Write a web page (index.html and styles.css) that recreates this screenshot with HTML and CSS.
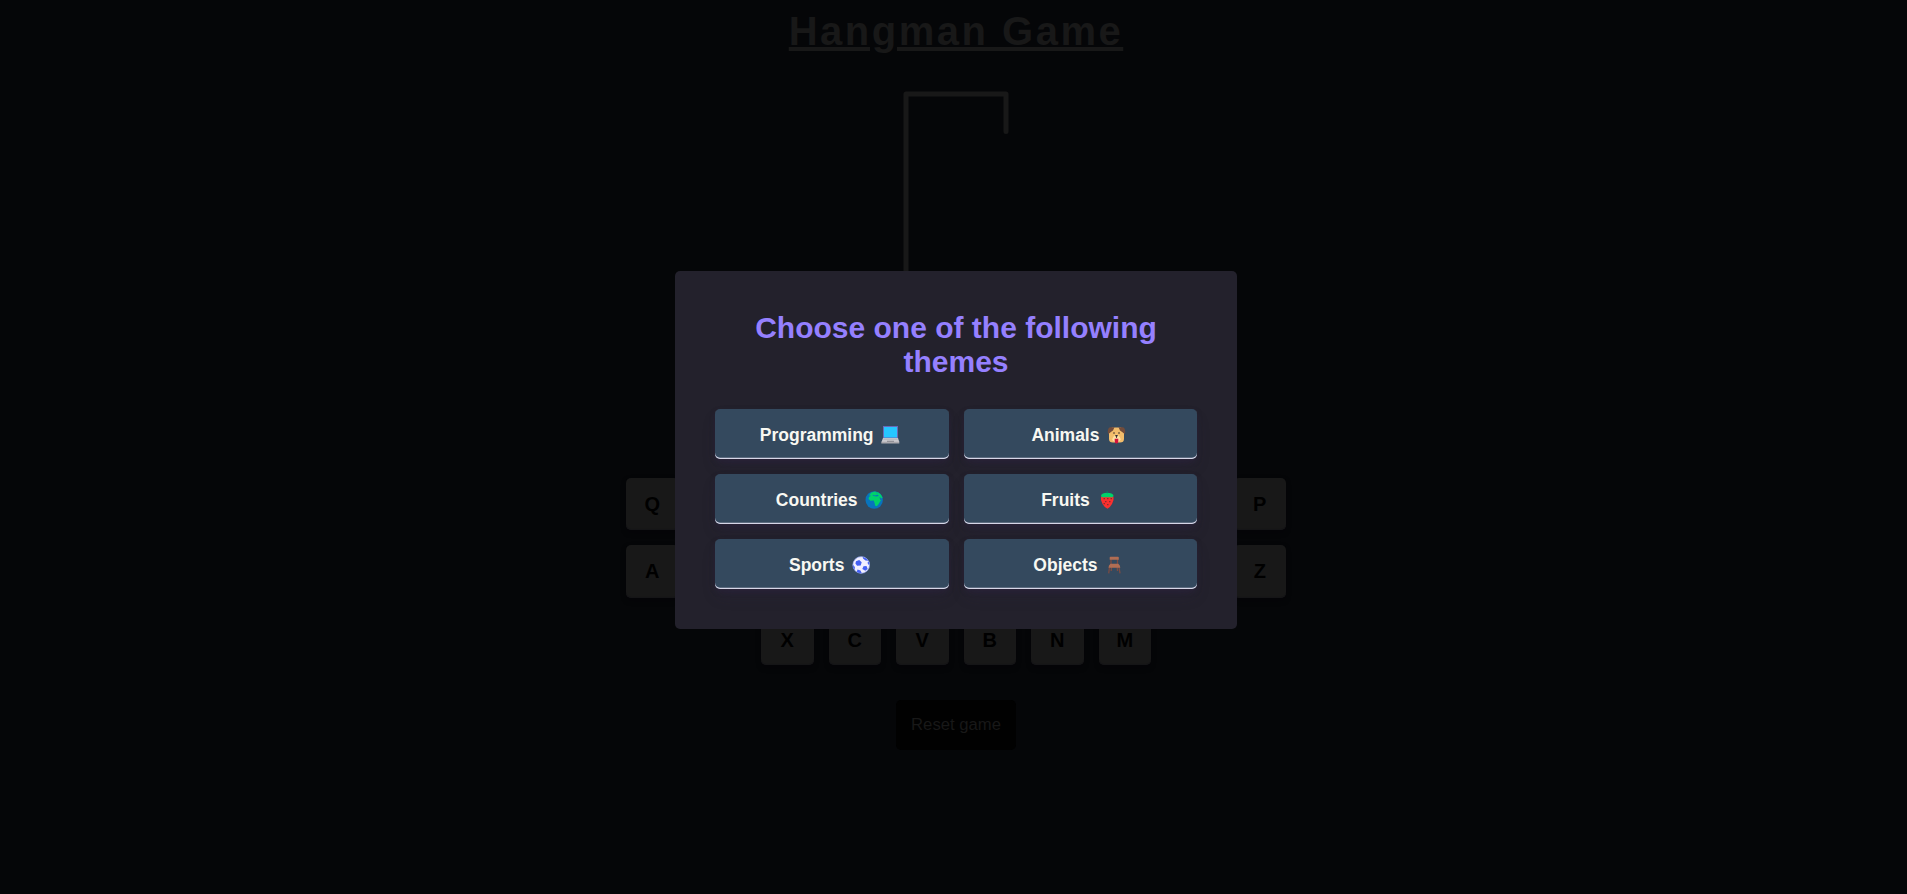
FILE: index.html
```html
<!DOCTYPE html>
<html lang="en">
<head>
<meta charset="utf-8">
<title>Hangman Game</title>
<link rel="stylesheet" href="styles.css">
</head>
<body>
<main class="game">
  <h1 class="title">Hangman Game</h1>
  <svg class="gallows" viewBox="0 0 200 250">
    <path d="M60 20H140M140 20V50M60 20V230M20 230H100"/>
  </svg>
  <div class="keyboard">
    <button class="key">Q</button><button class="key">W</button><button class="key">E</button><button class="key">R</button><button class="key">T</button><button class="key">Y</button><button class="key">U</button><button class="key">I</button><button class="key">O</button><button class="key">P</button>
    <button class="key">A</button><button class="key">S</button><button class="key">D</button><button class="key">F</button><button class="key">G</button><button class="key">H</button><button class="key">J</button><button class="key">K</button><button class="key">L</button><button class="key">Z</button>
    <button class="key low">X</button><button class="key low">C</button><button class="key low">V</button><button class="key low">B</button><button class="key low">N</button><button class="key low">M</button>
  </div>
  <button class="reset">Reset game</button>
</main>
<div class="overlay">
  <section class="modal">
    <h2 class="modal-title">Choose one of the following themes</h2>
    <div class="themes">
      <button class="theme">Programming <svg class="icon" viewBox="0 0 24 18"><path fill="#6969b8" d="M5 0h15v12H5z"/><path fill="#26c6ff" d="M6 1h13v10.500H6z"/><path fill="#c9c9ce" d="M5 12h15l1.300 4H3.500z"/><path fill="#aaa9ae" d="M3.300 15.800h18v1.700h-18zM5.500 12.700h14v.8h-14z"/><path fill="#85858c" d="M9 14.800h7v1H9z"/></svg></button>
      <button class="theme">Animals <svg class="icon" viewBox="0 0 24 18"><path fill="#f3bd6b" d="M8 1.500h9l3 5.500v6q0 3.500-4 3.500H9q-4 0-4-3.500V7z"/><path fill="#734c3b" d="M4.500 2.500Q5 1.300 7 1.300h3.500L9 4.500 6.200 6.500 4.500 8Q3 6 4.500 2.500zM20.500 2.500Q20 1.300 18 1.300h-3.500L16 4.500l2.800 2 1.700 1.500q1.500-2 0-5.500z"/><path fill="#ffe0a2" d="M12.500 8.500q3.300 1 4.300 5-1.500 2.500-4.300 2.300-3.500 0-4.300-2.300 1-4 4.300-5z"/><circle cx="10" cy="7" r=".8" fill="#352b2b"/><circle cx="15" cy="7" r=".8" fill="#352b2b"/><path fill="#352b2b" d="M11.300 9h2.400v1l-.8.700V12h-.8v-1.300l-.8-.7z"/><path fill="#d4143c" d="M10.700 12.800h3.600V15q0 2.500-1.800 2.500T10.700 15z"/></svg></button>
      <button class="theme">Countries <svg class="icon" viewBox="0 0 24 18"><circle cx="12.200" cy="9" r="8.700" fill="#0874bd"/><path fill="#00d26a" d="M7 4.200 9.500 1.500 13 .5l3 .8 3 2.500 1.500 3-1 .8-2-1.800.5 2.700 1 .8-1.500 2.200-.8 1.500-2 2.200-1.500-.5-.7-3-.8-2.200-3.200.2L6.500 8l.5-2 2-1.200z"/><path fill="#0874bd" d="m10.500 3.700 2.500.8 2.500-.7 1.500 1.200-3 .5-3-.8zM13.500 1.200l2.500.7-1 .7z"/></svg></button>
      <button class="theme">Fruits <svg class="icon" viewBox="0 0 24 18"><path fill="#fb302f" d="M6 5.500h12.500q.8 4-1.500 7.500-2 3.500-4.500 4.700Q9.500 16.500 7.500 13 5.200 9.500 6 5.500z"/><path fill="#00d26a" d="M6 4.500Q7 1.700 12.200 1.700T18.500 4.500l-.7 1.700H6.700z"/><path fill="#008462" d="M11.700 0h1v2.200h-1z"/><path fill="#8b2a2f" d="M8.500 7h1.500v1.300H8.500zM12 7h1.500v1.300H12zM15.500 7H17v1.300h-1.500zM10 10h1.500v1.300H10zM14 10h1.500v1.300H14zM8.500 12H10v1.300H8.500zM12 13h1.500v1.300H12z"/></svg></button>
      <button class="theme">Sports <svg class="icon" viewBox="0 0 24 18"><circle cx="12.200" cy="9" r="8.500" fill="#f1efff"/><path fill="#4460f4" d="m7 5.300 3.200-1.200 2.500 2.200-1 3.200-3.600.2L6.400 7.500zM14.500 10.200l3-.2 1.200 3-2.400 1.800-3-1.700zM13.800.8q4 .8 5.500 4l-2.800-.2-2.500-2zM3.700 8.500l2.200 2.500-.3 3Q3.500 12 3.700 8.500zM8.500 13.500l3 1 1.300 2.700q-3.300.2-5-1.500zM20.700 8l-1.500.7-.7-2.200 1.300-1z"/><circle cx="12.200" cy="9" r="8.400" fill="none" stroke="#748be4" stroke-width=".6"/></svg></button>
      <button class="theme">Objects <svg class="icon" viewBox="0 0 24 18"><path fill="none" stroke="#7b4b43" stroke-width="1.300" d="M9 3v6M15.500 3v6M7.500 11 6.700 17.300M17 11l1 6.300M9.500 11l-.3 4M15.200 11l.3 4"/><path fill="#b16d53" d="M8.500.7h7.500q.8 0 .8.800v2.200H7.700V1.500q0-.8.800-.8zM8.500 7.700h7.800q2 1.500 2 4H6.500q0-2.500 2-4z"/></svg></button>
    </div>
  </section>
</div>
</body>
</html>
```
FILE: styles.css
```css
* { box-sizing: border-box; }
body {
  margin: 0;
  height: 894px;
  overflow: hidden;
  background: #050608;
  font-family: "Liberation Sans", Arial, sans-serif;
}
button { border: 0; font-family: inherit; }
.game {
  width: 1912px;
  display: flex;
  flex-direction: column;
  align-items: center;
}
.title {
  margin: 8px 0 15px;
  height: 46px;
  font-size: 40px;
  line-height: 46px;
  letter-spacing: 2.5px;
  text-decoration: underline;
  color: #181818;
}
.gallows {
  width: 250px;
  height: 312.5px;
  fill: none;
  stroke: #181818;
  stroke-width: 4;
  stroke-linecap: round;
}
.keyboard {
  width: 660px;
  margin-top: 96px;
  display: flex;
  flex-wrap: wrap;
  justify-content: center;
  gap: 15px;
}
.key {
  width: 52.5px;
  height: 52.5px;
  padding: 1px 0 0;
  border-radius: 5px;
  background: #181818;
  color: #000;
  font-size: 20px;
  font-weight: bold;
  box-shadow: 0 2.5px 5px rgba(4, 3, 7, .4), inset 0 -1.25px 0 #151517;
}
.key.low { padding-top: 3px; }
.reset {
  width: 120px;
  height: 50px;
  margin-top: 34.500px;
  padding: 0;
  border-radius: 5px;
  background: #010101;
  color: #181818;
  font-size: 16.667px;
}
.overlay {
  position: absolute;
  top: 0;
  left: 0;
  width: 1912px;
  height: 900px;
  display: flex;
  align-items: center;
  justify-content: center;
}
.modal {
  width: 562.5px;
  height: 358px;
  padding: 40px;
  border-radius: 5px;
  background: #23212c;
}
.modal-title {
  margin: 0 0 30px;
  font-size: 30px;
  line-height: 34px;
  text-align: center;
  color: #9580ff;
}
.themes {
  display: grid;
  grid-template-columns: 1fr 1fr;
  gap: 15px;
}
.theme {
  height: 50px;
  padding: 2px 1px 0 0;
  border-radius: 5px;
  background: #34495e;
  color: #f8f8f2;
  font-size: 17.5px;
  font-weight: bold;
  box-shadow: rgba(45, 35, 66, .4) 0 2.5px 5px, rgba(45, 35, 66, .3) 0 8.75px 16.25px -3.75px, #d6d6e7 0 -1.25px 0 inset;
}
.icon {
  width: 24px;
  height: 18px;
  vertical-align: -3px;
}
```
